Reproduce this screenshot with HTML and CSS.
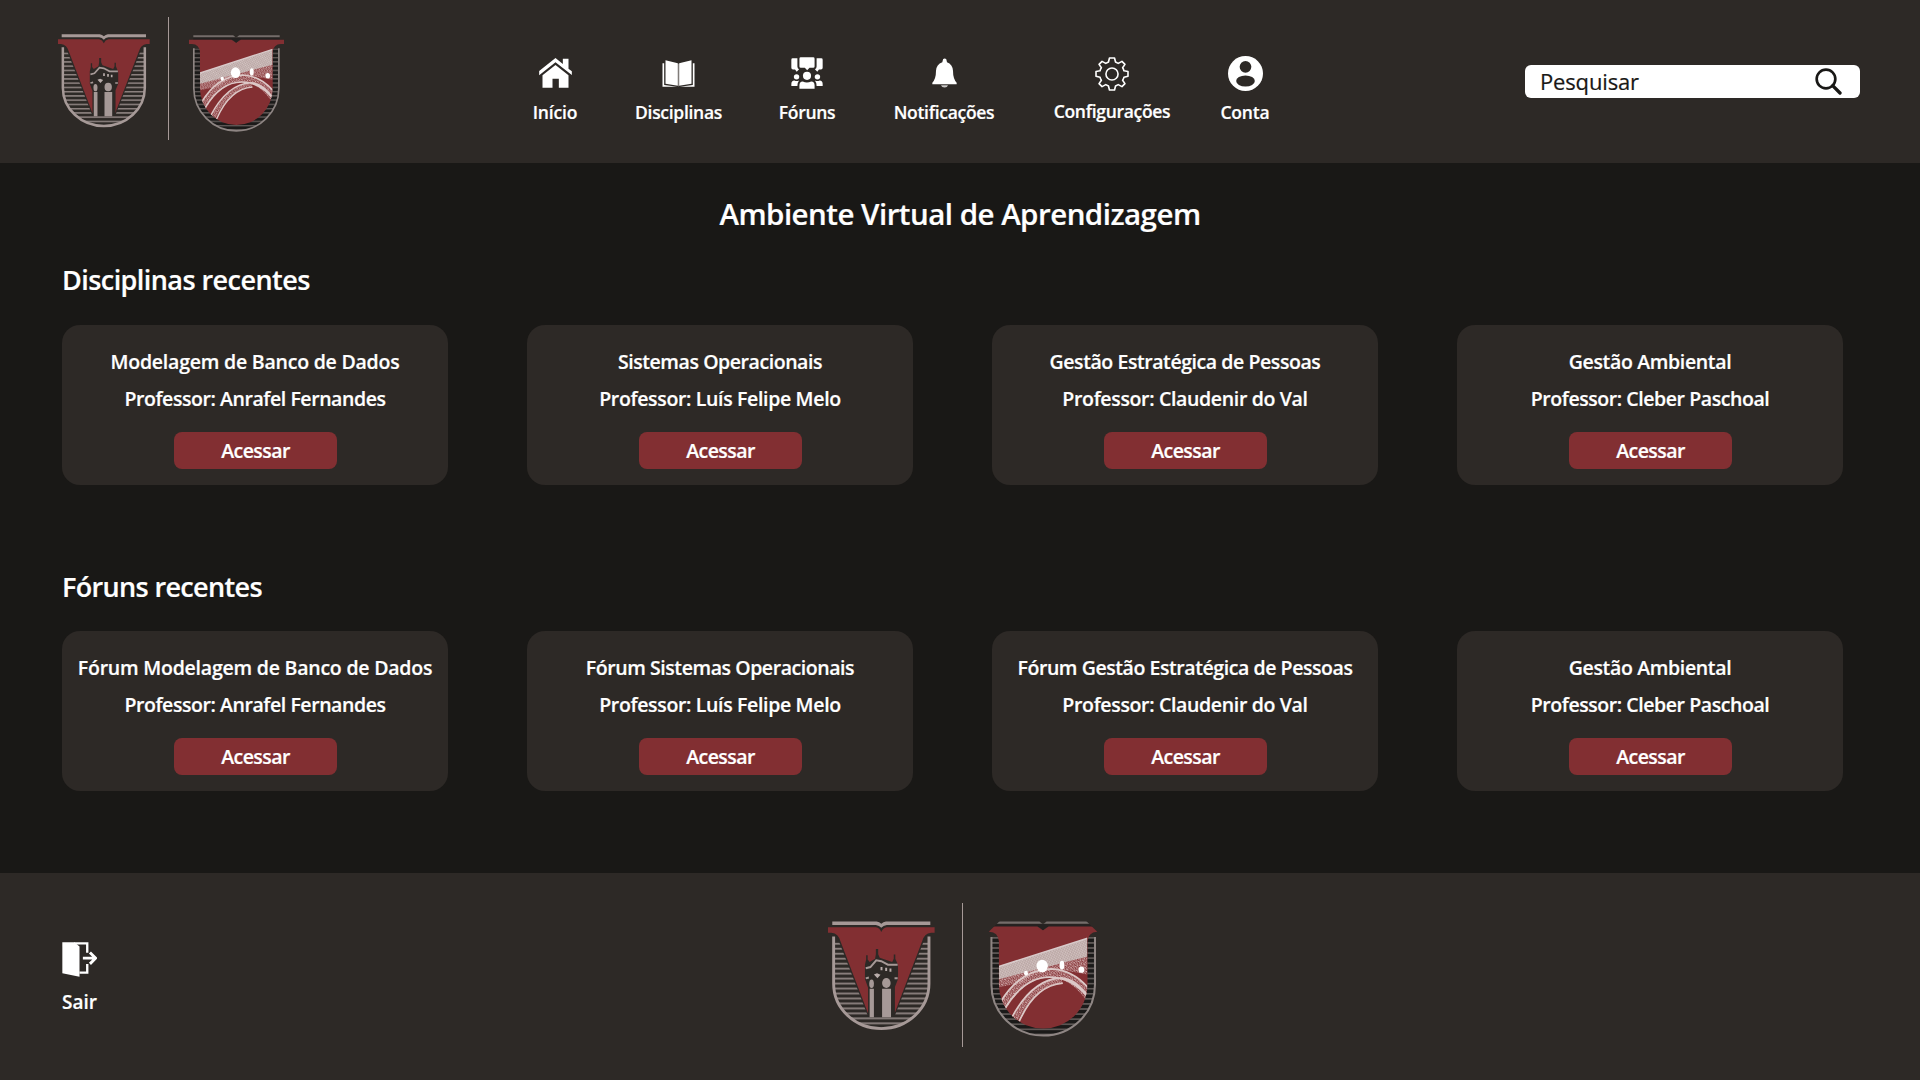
FILE: index.html
```html
<!DOCTYPE html>
<html lang="pt-BR">
<head>
<meta charset="utf-8">
<title>Ambiente Virtual de Aprendizagem</title>
<link rel="stylesheet" href="styles.css">
</head>
<body>
<svg class="defs" aria-hidden="true">
  <defs>
    <clipPath id="u1"><path d="M70 141V262A122 116 0 0 0 314 262V141Z"/></clipPath>
    <clipPath id="u2"><path d="M460 144V264A127 127 0 0 0 714 264V144Z"/></clipPath>
    <clipPath id="in2"><path d="M478 110H697V264A109.500 110 0 0 1 478 264Z"/></clipPath>
    <pattern id="hatch1" width="20" height="12.750" y="157" patternUnits="userSpaceOnUse"><rect width="20" height="4.500" fill="#8f8482"/></pattern>
    <pattern id="hatch2" width="20" height="12.750" y="157" patternUnits="userSpaceOnUse"><rect width="20" height="12.750" fill="#1b1a19"/><rect width="20" height="4" fill="#625b59"/></pattern>
    <pattern id="mesh" width="11" height="10" patternUnits="userSpaceOnUse" patternTransform="rotate(-17)"><path d="M0 2l4 3M6 0l3 4M2 8l4-1M8 7l3 2" stroke="#d9b9b9" stroke-width="2.800"/></pattern>
    <pattern id="deck" width="7" height="8" patternUnits="userSpaceOnUse" patternTransform="rotate(-17)"><rect width="7" height="8" fill="#bfaeac"/><path d="M0 2h3M4 6h3" stroke="#e6d8d7" stroke-width="2"/><path d="M4 2h2M0 6h2" stroke="#a58886" stroke-width="1.500"/></pattern>
    <g id="tower">
      <rect x="70" y="152" width="244" height="232" fill="url(#hatch1)" clip-path="url(#u1)"/>
      <path d="M76 135L88 166L158 346H226L296 166L308 135Z" fill="#2d2926"/>
      <path d="M66 102H180Q187 103 192 108Q197 103 204 102H318V111H206Q197 112 192 118Q187 112 178 111H66Z" fill="#a69997"/>
      <path d="M55 117H178Q188 119 192 129Q196 119 206 117H329V131H320Q302 133 297 153L226 338H158L87 153Q82 133 64 131H55Z" fill="#822f32"/>
      <path d="M158 340V272L150 250V213L153 200V189H157V200L162 206L176 198L178 186V173H184V186L188 195L220 206L224 198V187H228V198L235 214V250L227 270V340Z" fill="#2d2926"/>
      <path d="M162 275h11v73h-11zM194 275h23v73h-23z" fill="#a69997"/>
      <path d="M152 222L164 219L179 202L192 204L209 213H234M152 248L160 246M226 248H234" fill="none" stroke="#a69997" stroke-width="5"/>
      <path d="M190 219h5v8h-5zM202 221h5v8h-5zM213 223h5v8h-5zM173 238l8-3 9 4-8 9z" fill="#b9adab"/>
      <ellipse cx="167" cy="262" rx="6" ry="11" fill="#a69997"/>
      <ellipse cx="205" cy="260" rx="11" ry="13" fill="#a69997"/>
      <path d="M69.500 141V262A122.500 115 0 0 0 314.500 262V141" fill="none" stroke="#a69997" stroke-width="7.500"/>
    </g>
    <g id="bridge">
      <rect x="458" y="144" width="260" height="250" fill="url(#hatch2)" clip-path="url(#u2)"/>
      <path d="M458 105H578L587 112L596 105H718V111H458Z" fill="#746c6a"/>
      <path d="M458 112H718V119H458Z" fill="#242120"/>
      <path d="M445 118H573L587 127L601 118H731V131H722Q699 132 697 155V264A109.500 110 0 0 1 478 264V155Q476 132 454 131H445Z" fill="#822f32"/>
      <path d="M573 114L587 127L601 114Z" fill="#242120"/>
      <g clip-path="url(#in2)">
        <path d="M478 245L697 190V238L620 224L565 236L535 258L478 270Z" fill="url(#mesh)"/>
        <path d="M478 218L697 147V193L478 250Z" fill="url(#deck)"/>
        <path d="M478 218L697 147" stroke="#d8caca" stroke-width="4"/>
        <path d="M487 318Q535 236 604 234Q660 236 699 292" fill="none" stroke="url(#mesh)" stroke-width="22"/>
        <path d="M482 307Q530 226 607 224Q664 227 702 276M493 323Q541 244 605 245Q660 246 699 297M509 348Q560 250 632 247Q667 249 699 294M528 356Q568 265 636 260" fill="none" stroke="#dcc8c7" stroke-width="4.500"/>
        <path d="M519 350Q564 259 634 254" fill="none" stroke="url(#mesh)" stroke-width="13"/>
        <g fill="#fff"><ellipse cx="585" cy="217" rx="14" ry="16"/><ellipse cx="634" cy="215" rx="6" ry="11"/><ellipse cx="682" cy="226" rx="7" ry="8"/><ellipse cx="545" cy="235" rx="5" ry="6"/></g>
      </g>
      <path d="M459.500 144V264A127.500 127 0 0 0 715.500 264V144" fill="none" stroke="#8e8583" stroke-width="5"/>
    </g>
  </defs>
</svg>

<header class="topbar">
  <div class="brand">
    <svg class="crest-tower" viewBox="55 101 275 282" preserveAspectRatio="none"><use href="#tower"/></svg>
    <span class="rule"></span>
    <svg class="crest-bridge" viewBox="445 104 286 291" preserveAspectRatio="none"><use href="#bridge"/></svg>
  </div>
  <nav class="menu">
    <a class="item"><span class="glyph"><svg width="33" height="30" viewBox="86 54 98 90" fill="#fff"><path d="M86 93L135 54L157 72V56H174V86L184 94V105L135 67L86 106Z"/><path d="M96 106L135 75L174 106V143H145V116H126V143H96Z"/></svg></span><span class="label">Início</span></a>
    <a class="item"><span class="glyph"><svg width="33" height="27" viewBox="455 61 98 81"><path d="M456 71H461V136L500 141H456ZM552 71H547V136L508 141H552Z" fill="#fff"/><path d="M465 62L502 71V138L465 132ZM543 62L506 71V138L543 132Z" fill="#fff"/><path d="M504 72V140" stroke="#aaa7a5" stroke-width="2"/></svg></span><span class="label snug">Disciplinas</span></a>
    <a class="item"><span class="glyph"><svg width="32" height="32" viewBox="845 50 95 95" fill="#fff"><path d="M874 51H911Q915 51 915 55V78Q915 82 911 82H900L893 89L886 82H874Q870 82 870 78V55Q870 51 874 51ZM850 54H864V78Q864 84 869 86L862 94L857 87H851Q846 87 846 82V58Q846 54 850 54ZM935 54H921V78Q921 84 916 86L923 94L928 87H934Q939 87 939 82V58Q939 54 935 54Z"/><circle cx="892.500" cy="106" r="12"/><circle cx="861.500" cy="109" r="8"/><circle cx="923.500" cy="109" r="8"/><path d="M870 144V134Q870 124 880 123Q892 128 905 123Q915 124 915 134V144ZM846 136V130Q846 121 855 120Q862 123 869 120Q864 126 864 136ZM939 136V130Q939 121 930 120Q923 123 916 120Q921 126 921 136Z"/></svg></span><span class="label snug">Fóruns</span></a>
    <a class="item"><span class="glyph"><svg width="25" height="30" viewBox="156 56 75 89"><path d="M188 64Q188 57 194 57Q200 57 200 64L201 68Q218 74 219 94Q219 118 230 130V134H157V130Q168 118 168 94Q169 74 187 68Z" fill="#fff"/><path d="M183 137H204Q202 144 194 144Q185 144 183 137Z" fill="#c9c7c6"/></svg></span><span class="label snug">Notificações</span></a>
    <a class="item raised"><span class="glyph"><svg width="34" height="34" viewBox="647 50 101 101" fill="none" stroke="#fff" stroke-width="4.800" stroke-linejoin="round"><circle cx="697.500" cy="100.500" r="18"/><path d="M690 53H705L708 65Q712 67 716 69L727 63L736 72L729 82Q732 86 733 91L745 93V107L733 110Q732 115 729 119L736 129L727 138L716 132Q712 134 708 136L705 148H690L687 136Q683 134 679 132L668 138L659 129L666 119Q663 115 662 110L650 107V93L662 91Q663 86 666 82L659 72L668 63L679 69Q683 67 687 65Z"/></svg></span><span class="label snug">Configurações</span></a>
    <a class="item"><span class="glyph"><svg width="35" height="35" viewBox="1044 45 105 105"><circle cx="1096.500" cy="97.500" r="52.500" fill="#fff"/><circle cx="1096.500" cy="77.500" r="17.500" fill="#2d2926"/><ellipse cx="1096.500" cy="120" rx="28" ry="16.500" fill="#2d2926"/></svg></span><span class="label">Conta</span></a>
  </nav>
  <div class="search">
    <span>Pesquisar</span>
    <svg width="27" height="27" viewBox="944 53 81 81" fill="none" stroke="#191816"><circle cx="977" cy="86" r="28" stroke-width="8"/><path d="M997 106L1019 128" stroke-width="10" stroke-linecap="round"/></svg>
  </div>
</header>

<main class="content">
  <h1>Ambiente Virtual de Aprendizagem</h1>
  <section>
    <h2>Disciplinas recentes</h2>
    <div class="cards">
      <article class="card"><p class="wide">Modelagem de Banco de Dados</p><p class="narrow">Professor: Anrafel Fernandes</p><a class="btn">Acessar</a></article>
      <article class="card"><p class="narrow">Sistemas Operacionais</p><p>Professor: Luís Felipe Melo</p><a class="btn">Acessar</a></article>
      <article class="card"><p class="narrow">Gestão Estratégica de Pessoas</p><p>Professor: Claudenir do Val</p><a class="btn">Acessar</a></article>
      <article class="card"><p>Gestão Ambiental</p><p class="narrow">Professor: Cleber Paschoal</p><a class="btn">Acessar</a></article>
    </div>
  </section>
  <section>
    <h2>Fóruns recentes</h2>
    <div class="cards">
      <article class="card"><p class="wide">Fórum Modelagem de Banco de Dados</p><p class="narrow">Professor: Anrafel Fernandes</p><a class="btn">Acessar</a></article>
      <article class="card"><p class="narrow">Fórum Sistemas Operacionais</p><p>Professor: Luís Felipe Melo</p><a class="btn">Acessar</a></article>
      <article class="card"><p class="narrow">Fórum Gestão Estratégica de Pessoas</p><p>Professor: Claudenir do Val</p><a class="btn">Acessar</a></article>
      <article class="card"><p>Gestão Ambiental</p><p class="narrow">Professor: Cleber Paschoal</p><a class="btn">Acessar</a></article>
    </div>
  </section>
</main>

<footer class="footer">
  <a class="exit">
    <svg width="35" height="35" viewBox="68 65 104 104"><path d="M69 66H105L120 78V168L69 158Z" fill="#fff"/><path d="M104 69H143V97M143 130V156H120" fill="none" stroke="#fff" stroke-width="7"/><path d="M130 113H168M151 96L168 113L151 130" fill="none" stroke="#fff" stroke-width="8.500"/></svg>
    <span>Sair</span>
  </a>
  <div class="brand-large">
    <svg class="crest-tower" viewBox="55 101 275 282" preserveAspectRatio="none"><use href="#tower"/></svg>
    <span class="rule"></span>
    <svg class="crest-bridge" viewBox="453.500 104 267 291" preserveAspectRatio="none"><use href="#bridge"/></svg>
  </div>
</footer>
</body>
</html>
```
FILE: styles.css
```css
* { box-sizing: border-box; margin: 0; padding: 0; }
body { height: 1080px; overflow: hidden; display: flex; flex-direction: column; background: #191816; color: #fff; font-family: "Open Sans", "Noto Sans", sans-serif; font-weight: 600; -webkit-text-stroke: 0.200px currentColor; }
svg { display: block; flex: none; }
.defs { width: 0; height: 0; position: absolute; }

.topbar { height: 163px; flex: none; display: flex; background: #2d2926; }
.brand { width: 495px; padding: 17px 0 0 58px; display: flex; align-items: flex-start; }
.brand .crest-tower { width: 92px; height: 94px; margin-top: 17px; }
.brand .rule { width: 1px; height: 123px; margin: 0 20px 0 18px; background: #a69997; }
.brand .crest-bridge { width: 95px; height: 97px; margin-top: 18px; }
.menu { width: 787px; padding-top: 54px; display: grid; grid-template-columns: 120px 127px 130px 144px 192px 74px; align-items: start; }
.item { display: flex; flex-direction: column; align-items: center; }
.glyph { height: 38px; display: flex; align-items: center; }
.label { font-size: 17.500px; line-height: 26px; white-space: nowrap; margin-top: 7px; letter-spacing: -0.150px; }
.label.snug { letter-spacing: -0.300px; }
.raised .glyph { padding-top: 1px; }
.raised .label { margin-top: 6px; }
.search { width: 335px; height: 33px; margin: 65px 0 0 243px; padding: 0 18px 0 15px; border-radius: 6px; background: #fff; color: #191816; display: flex; align-items: center; justify-content: space-between; font-size: 22px; font-weight: 400; line-height: 33px; letter-spacing: -0.150px; }

.content { flex: 1; padding: 31px 62px 0; }
h1 { font-size: 29.500px; font-weight: 600; line-height: 40px; letter-spacing: -0.520px; text-align: center; }
h2 { font-size: 27px; font-weight: 600; line-height: 40px; letter-spacing: -0.560px; }
section { margin-top: 26px; }
section + section { margin-top: 80px; }
section + section h2 { height: 41px; padding-top: 2px; letter-spacing: -0.650px; }
.cards { margin-top: 25px; display: grid; grid-template-columns: repeat(4, 386px); gap: 79px; }
.card { height: 160px; padding-top: 18px; border-radius: 18px; background: #2d2926; display: flex; flex-direction: column; align-items: center; font-size: 19.500px; letter-spacing: -0.340px; }
.card p { line-height: 37px; white-space: nowrap; }
.card .wide { letter-spacing: -0.220px; }
.card .narrow { letter-spacing: -0.430px; }
.btn { width: 163px; height: 37px; margin-top: 15px; padding-left: 1px; border-radius: 8px; background: #822f32; text-align: center; line-height: 37px; letter-spacing: -0.550px; }

.footer { height: 207px; flex: none; display: flex; background: #2d2926; }
.exit { width: 828px; padding: 69px 0 0 62px; display: flex; flex-direction: column; align-items: flex-start; font-size: 19px; line-height: 26px; gap: 12px; }
.brand-large { padding-top: 30px; display: flex; align-items: flex-start; }
.brand-large .crest-tower { width: 107px; height: 110px; margin-top: 18px; }
.brand-large .rule { width: 1px; height: 144px; margin: 0 26px 0 27px; background: #a69997; }
.brand-large .crest-bridge { width: 108px; height: 116px; margin-top: 18px; clip-path: polygon(10% 0, 90% 0, 100% 9%, 100% 100%, 0 100%, 0 9%); }
```
